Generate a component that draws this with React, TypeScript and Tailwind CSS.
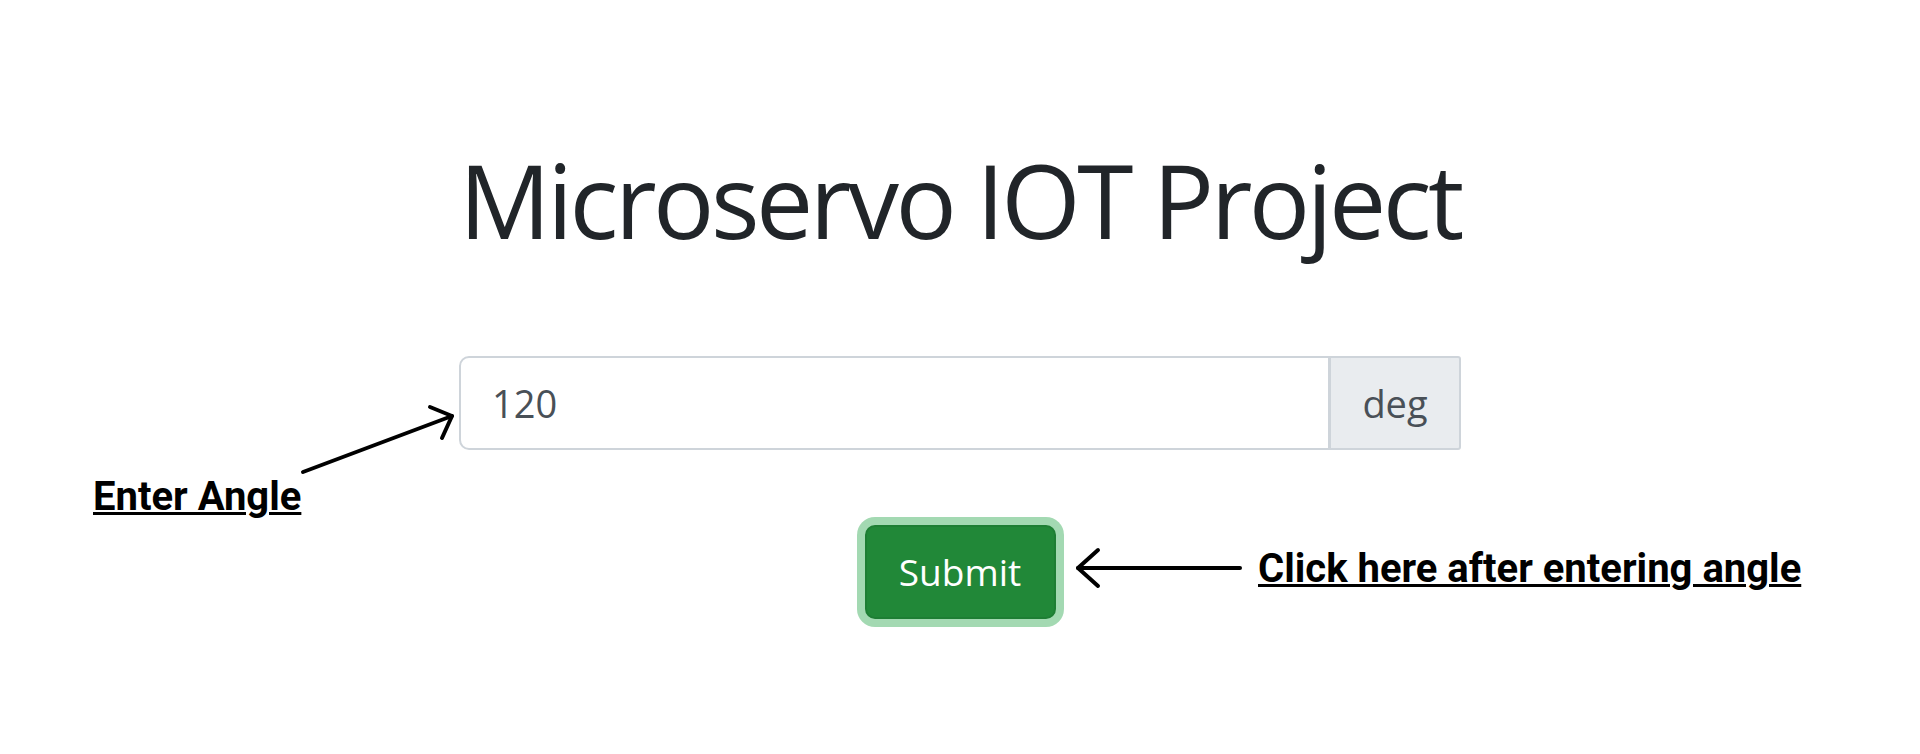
import { useState } from 'react'

export default function App() {
  const [angle, setAngle] = useState('120')

  return (
    <div className="relative min-h-[754px] w-full bg-white font-['Open_Sans','Noto_Sans',sans-serif]">
      <div className="flex flex-col items-center pt-[149px]">
        <h1 className="h-[108px] text-[102px] font-normal leading-none tracking-[-3.5px] text-[#212529]">Microservo IOT Project</h1>

        <div className="mt-[99px] flex h-[94px] w-[1002px]">
          <input
            value={angle}
            onChange={(e) => setAngle(e.target.value)}
            className="h-full min-w-0 flex-1 rounded-l-[10px] border-2 border-[#ced4da] bg-white pl-[31px] text-[38px] text-[#495057] outline-none"
          />
          <div className="-ml-px flex h-full w-[132px] items-center justify-center rounded-r-[3px] border-2 border-[#ced4da] bg-[#e9ecef] text-[38px] text-[#495057]">
            deg
          </div>
        </div>

        <button className="mt-[75px] h-[94px] w-[191px] rounded-[10px] border-2 border-[#1e7e34] bg-[#218838] text-[37px] text-white shadow-[0_0_0_8px_#a3d9b2]">
          Submit
        </button>
      </div>

      {/* annotations */}
      <span className="absolute left-[93px] top-[477px] font-['Roboto',sans-serif] text-[40px] font-bold leading-none text-black underline decoration-[3px]">
        Enter Angle
      </span>
      <span className="absolute left-[1258px] top-[549px] font-['Roboto',sans-serif] text-[40px] font-bold leading-none text-black underline decoration-[3px]">
        Click here after entering angle
      </span>

      <svg className="pointer-events-none absolute left-0 top-0" width="1920" height="754" fill="none" stroke="black" strokeWidth="4" strokeLinecap="round" strokeLinejoin="round">
        <path d="M303 472 L452 416" />
        <path d="M430 407 L452 416 L442 438" />
        <path d="M1078 568 L1240 568" />
        <path d="M1098 550 L1078 568 L1098 586" />
      </svg>
    </div>
  )
}
